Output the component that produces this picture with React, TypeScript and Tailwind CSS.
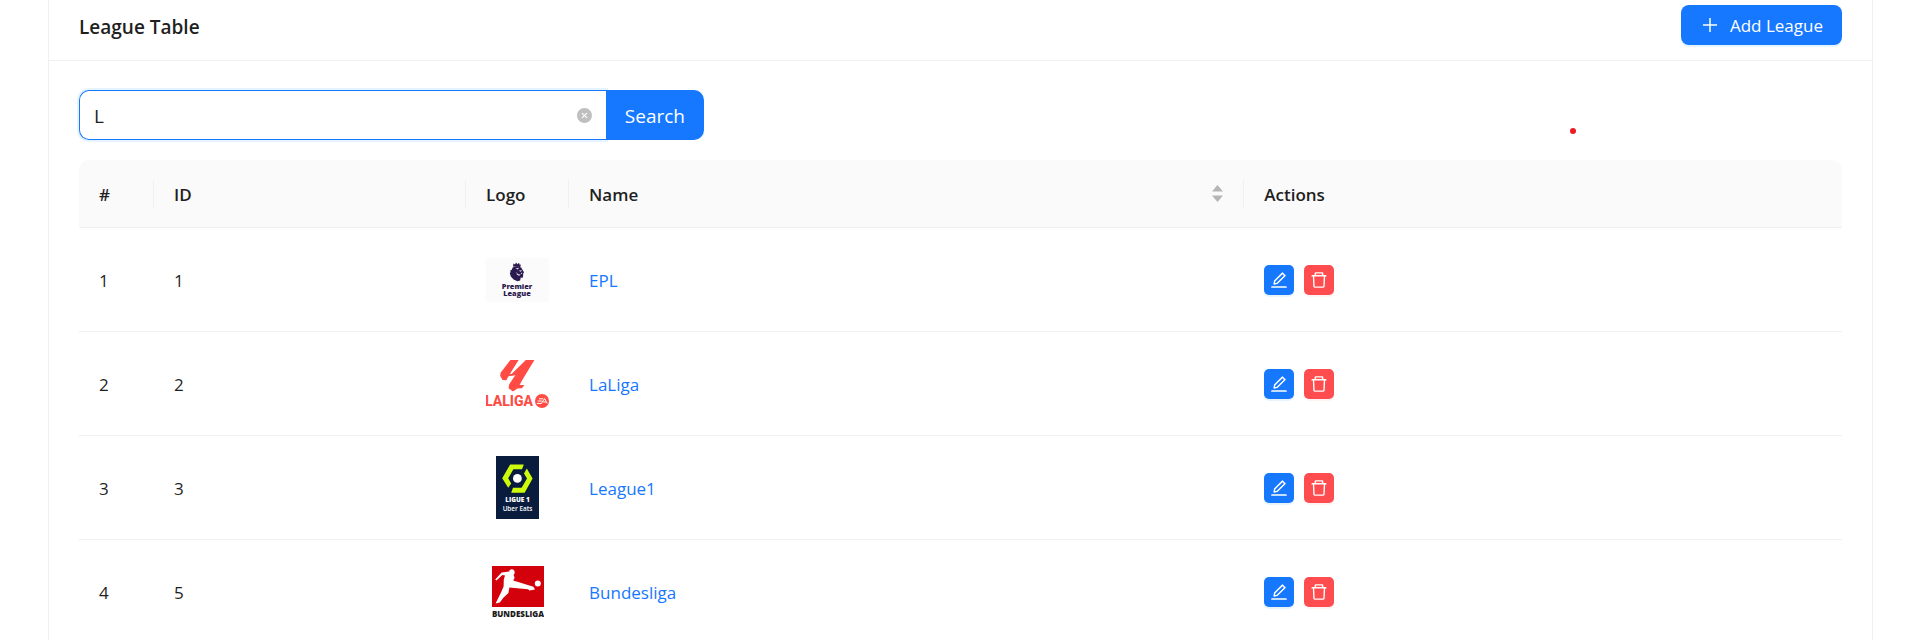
import React, { useState } from "react";
import {
  AiFillCloseCircle,
  AiOutlineDelete,
  AiOutlineEdit,
  AiOutlinePlus,
} from "react-icons/ai";

function PremierLeagueLogo() {
  return (
    <svg viewBox="0 0 63 44" className="h-11 w-[63px]" role="img" aria-label="Premier League logo">
      <rect width="63" height="44" fill="#fbfbfb" />
      <g fill="#2b1a4f">
        <path d="M27 8.5 27.4 5.6 29 6.6 30 4.6 31.4 6.3 33 4.7 33.6 6.8 34.8 6.4 34.4 9Z" />
        <path d="M26.6 9.4C29 8.2 33 8 35.2 9.6L36.6 12 38 14.2 37.2 15.6 37 19.4 34.6 19.8 34.2 22.4 31.4 23.2 27.6 21.6 24.8 18.6 23.8 15.2 24.6 14 24.2 12.4 25.8 11.8Z" />
      </g>
      <path d="M29.6 10.4 33.2 9.8 31.6 11.4ZM32.6 12.8 36 12.2 34.8 13.8ZM30.6 13.4 31.6 16 34.8 16.8 33 17.8 30.8 16.4ZM34.6 15 36.4 14.8 35.6 16.2Z" fill="#e9e6f0" />
      <g fill="#2b1a4f" fontFamily="'Open Sans', sans-serif" fontWeight="800" fontSize="7.4" textAnchor="middle">
        <text x="31" y="31">Premier</text>
        <text x="31" y="38">League</text>
      </g>
    </svg>
  );
}

function LaLigaLogo() {
  return (
    <svg viewBox="0 0 63 48" className="h-12 w-[63px]" role="img" aria-label="LaLiga logo">
      <g fill="#ff4b44">
        <path d="M24.4 0H32.6L22 17 20.4 20.2 16.6 20 14.2 16 14.6 12.8Z" />
        <path d="M39.8 0H48.4L36 20.6 33.6 25H38.4L36 28.2 31.4 28.6 27 31.4 22.6 28.2 23.2 24.2 29.6 14.8 24.6 15.6 25.6 14Z" />
        <path d="M22 14.2 29.8 13.6 29.4 15.2 21.6 16.4Z" />
        <text x="-1" y="46.4" fontFamily="Roboto, 'Open Sans', sans-serif" fontWeight="800" fontSize="14">LALIGA</text>
        <circle cx="56" cy="41" r="7" />
      </g>
      <path d="M53 38.8H57.2M51.6 41H55.8M50.8 43.4H55.4L58.6 38.6 61.2 43.4M57.2 42H60" fill="none" stroke="#fff" strokeWidth="1" />
    </svg>
  );
}

function Ligue1Logo() {
  return (
    <svg viewBox="0 0 43 63" className="h-[63px] w-[43px]" role="img" aria-label="Ligue 1 logo">
      <rect width="43" height="63" fill="#091c3e" />
      <path d="M14.2 8.4H27.8L26 13.2H17.4L12.2 22.2 15.2 27.4 12.2 31.8 6.2 22.2Z" fill="#cdfb0a" />
      <path d="M30.8 12.4 36.6 22.6 28.6 36.8H15.2L17 31.8H25.6L31 22.6 28 17.4Z" fill="#cdfb0a" />
      <circle cx="21.4" cy="22.4" r="4.4" fill="#fff" />
      <g fill="#fff" fontFamily="'Open Sans', sans-serif" textAnchor="middle">
        <text x="21.5" y="46.4" fontSize="6.4" fontWeight="800">LIGUE 1</text>
        <text x="21.5" y="54.6" fontSize="6.4" fontWeight="600">Uber Eats</text>
      </g>
    </svg>
  );
}

function BundesligaLogo() {
  return (
    <svg viewBox="0 0 52 52" className="h-[52px] w-[52px]" role="img" aria-label="Bundesliga logo">
      <rect width="52" height="41" fill="#d3010c" />
      <g fill="#fff">
        <path d="M3.2 13.6 9.6 6.4 17.2 5.4 17.6 4.2Q20 2.4 22.2 4.4 23.4 6.6 21.6 9L22.6 11.8 21.2 14.6 31 17.6 41.4 20.8 43 23.6 37.6 24.6 36 23.2 22.6 22 17.4 21.6 16.4 27 11.4 31.8 7.8 36.6 3.6 37.4 6 32.4 9 26.4 11.6 20.6 11.8 13.6 13 9.4 10.4 9 4.4 14.6Z" />
        <circle cx="45.8" cy="17.6" r="3" />
      </g>
      <text x="26" y="51.2" fill="#1a1a1a" fontFamily="'Open Sans', sans-serif" fontWeight="800" fontSize="8" textAnchor="middle">BUNDESLIGA</text>
    </svg>
  );
}

const leagues = [
  { id: 1, name: "EPL", Logo: PremierLeagueLogo },
  { id: 2, name: "LaLiga", Logo: LaLigaLogo },
  { id: 3, name: "League1", Logo: Ligue1Logo },
  { id: 5, name: "Bundesliga", Logo: BundesligaLogo },
];

const headCell = "flex h-7 items-center border-r border-[#f0f0f0] px-5";

export default function App() {
  const [query, setQuery] = useState("L");

  return (
    <div className="bg-white pr-[43px] pl-12 font-['Open_Sans','Noto_Sans',sans-serif] text-[17px] text-[#1f1f1f]">
      <main className="border-x border-[#f0f0f0]">
        <header className="flex items-center justify-between border-b border-[#f0f0f0] px-[30px] pt-[5px] pb-[15px]">
          <h1 className="pt-[4px] text-[19px] font-semibold">League Table</h1>
          <button
            type="button"
            className="flex h-10 items-center gap-[10px] rounded-lg bg-[#1677ff] px-[19px] text-white shadow-[0_2px_0_rgba(5,145,255,0.1)]"
          >
            <AiOutlinePlus className="size-5" />
            <span className="pt-[2px]">Add League</span>
          </button>
        </header>

        <div className="px-[30px] pt-[29px]">
          <div className="flex items-end">
            <form className="flex h-[50px] w-full max-w-[625px]" onSubmit={(e) => e.preventDefault()}>
              <div className="flex flex-1 items-center rounded-l-[10px] border border-r-0 border-[#1677ff] pr-[13px] pl-[14px] shadow-[0_0_0_2px_rgba(5,145,255,0.1)]">
                <input
                  type="text"
                  aria-label="Search leagues"
                  value={query}
                  onChange={(e) => setQuery(e.target.value)}
                  className="min-w-0 flex-1 bg-transparent pt-[2px] text-[19px] outline-none"
                />
                <button type="button" aria-label="Clear" onClick={() => setQuery("")} className="text-[#bfbfbf]">
                  <AiFillCloseCircle className="size-[17px]" />
                </button>
              </div>
              <button type="submit" className="relative rounded-r-[10px] bg-[#1677ff] px-[19px] pt-[2px] text-[19px] text-white">
                Search
              </button>
            </form>
            <span className="mr-[266px] mb-[6px] ml-auto size-[6px] rounded-full bg-[#ed1c24]" />
          </div>

          <table className="mt-5 w-full table-fixed border-separate border-spacing-0 text-left">
            <colgroup>
              <col className="w-[75px]" />
              <col className="w-[17.7%]" />
              <col className="w-[103px]" />
              <col className="w-[38.3%]" />
              <col />
            </colgroup>
            <thead>
              <tr className="h-[68px]">
                <th scope="col" className="rounded-tl-[10px] border-b border-[#f0f0f0] bg-[#fafafa] p-0 font-semibold">
                  <div className={headCell}><span className="pt-[2px]">#</span></div>
                </th>
                <th scope="col" className="border-b border-[#f0f0f0] bg-[#fafafa] p-0 font-semibold">
                  <div className={headCell}><span className="pt-[2px]">ID</span></div>
                </th>
                <th scope="col" className="border-b border-[#f0f0f0] bg-[#fafafa] p-0 font-semibold">
                  <div className={headCell}><span className="pt-[2px]">Logo</span></div>
                </th>
                <th scope="col" className="border-b border-[#f0f0f0] bg-[#fafafa] p-0 font-semibold">
                  <div className={headCell}>
                    <span className="flex-1 pt-[2px]">Name</span>
                    <button type="button" aria-label="Sort by name">
                      <svg viewBox="0 0 11 17" className="h-[17px] w-[11px]" fill="#b5b5b5">
                        <path d="M5.5 0 11 6.5H0ZM0 10.5H11L5.5 17Z" />
                      </svg>
                    </button>
                  </div>
                </th>
                <th scope="col" className="rounded-tr-[10px] border-b border-[#f0f0f0] bg-[#fafafa] px-5 pt-[2px] pb-0 font-semibold">
                  Actions
                </th>
              </tr>
            </thead>
            <tbody>
              {leagues.map(({ id, name, Logo }, index) => (
                <tr key={id} className="h-[104px]">
                  <td className="border-b border-[#f0f0f0] px-5 pt-[2px]">{index + 1}</td>
                  <td className="border-b border-[#f0f0f0] px-5 pt-[2px]">{id}</td>
                  <td className="border-b border-[#f0f0f0] px-5">
                    <div className="flex justify-center">
                      <Logo />
                    </div>
                  </td>
                  <td className="border-b border-[#f0f0f0] px-5 pt-[2px]">
                    <a href={`#league-${id}`} className="text-[#1677ff]">
                      {name}
                    </a>
                  </td>
                  <td className="border-b border-[#f0f0f0] px-5">
                    <div className="flex gap-[10px]">
                      <button
                        type="button"
                        aria-label={`Edit ${name}`}
                        className="flex size-[30px] items-center justify-center rounded-[5px] bg-[#1677ff] text-white shadow-[0_2px_0_rgba(5,145,255,0.1)]"
                      >
                        <AiOutlineEdit className="size-5" />
                      </button>
                      <button
                        type="button"
                        aria-label={`Delete ${name}`}
                        className="flex size-[30px] items-center justify-center rounded-[5px] bg-[#ff4d4f] text-white shadow-[0_2px_0_rgba(255,38,5,0.06)]"
                      >
                        <AiOutlineDelete className="size-5" />
                      </button>
                    </div>
                  </td>
                </tr>
              ))}
            </tbody>
          </table>
        </div>
      </main>
    </div>
  );
}
